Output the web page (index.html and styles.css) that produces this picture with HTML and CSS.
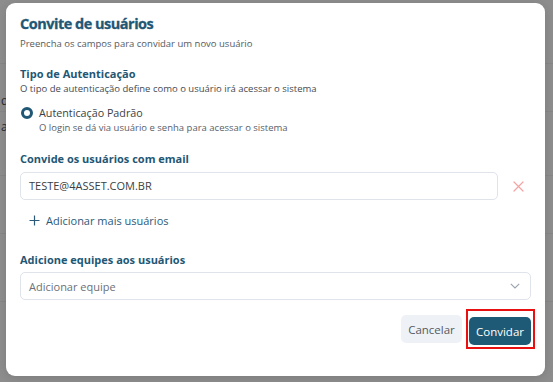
FILE: index.html
```html
<!DOCTYPE html>
<html lang="pt-BR">
<head>
<meta charset="utf-8">
<link rel="stylesheet" href="styles.css">
</head>
<body>
<div class="backdrop">
  <div class="bg-page">
    <div class="bg-row r1"></div>
    <div class="bg-row r2"><span>qu</span></div>
    <div class="bg-row r3"><span>ac</span></div>
    <div class="bg-row r4"></div>
    <div class="bg-row r5"></div>
  </div>
  <div class="modal">
    <h1 class="title">Convite de usuários</h1>
    <p class="subtitle">Preencha os campos para convidar um novo usuário</p>

    <section class="section auth">
      <h2 class="label">Tipo de Autenticação</h2>
      <p class="hint">O tipo de autenticação define como o usuário irá acessar o sistema</p>
      <div class="radio-row">
        <span class="radio"></span>
        <div class="radio-text">
          <div class="radio-title">Autenticação Padrão</div>
          <div class="radio-desc">O login se dá via usuário e senha para acessar o sistema</div>
        </div>
      </div>
    </section>

    <section class="section emails">
      <h2 class="label">Convide os usuários com email</h2>
      <div class="email-row">
        <div class="input">TESTE@4ASSET.COM.BR</div>
        <svg class="remove" width="11" height="11" viewBox="0 0 11 11"><path d="M1 1L10 10M10 1L1 10" stroke="#f4a3a3" stroke-width="1.2" fill="none" stroke-linecap="round"/></svg>
      </div>
      <div class="add-more">
        <svg width="11" height="11" viewBox="0 0 11 11"><path d="M5.5 0.5V10.5M0.5 5.5H10.5" stroke="#2a5a78" stroke-width="1.2" fill="none"/></svg>
        <span>Adicionar mais usuários</span>
      </div>
    </section>

    <section class="section teams">
      <h2 class="label">Adicione equipes aos usuários</h2>
      <div class="select">
        <span class="placeholder">Adicionar equipe</span>
        <svg width="10" height="6" viewBox="0 0 10 6"><path d="M0.8 0.8L5 5L9.2 0.8" stroke="#9aa3ae" stroke-width="1.1" fill="none"/></svg>
      </div>
    </section>

    <div class="actions">
      <button class="btn btn-cancel">Cancelar</button>
      <div class="highlight">
        <button class="btn btn-primary">Convidar</button>
      </div>
    </div>
  </div>
</div>
</body>
</html>
```

FILE: styles.css
```css
* { box-sizing: border-box; }
html, body { margin: 0; padding: 0; }
body {
  width: 553px;
  height: 382px;
  overflow: hidden;
  font-family: "Open Sans", "Noto Sans", sans-serif;
  background: #8d8d8d;
}
.backdrop {
  position: relative;
  width: 553px;
  height: 382px;
  padding: 3px 8px 6px 6px;
}
.bg-page {
  position: absolute;
  inset: 0;
  display: flex;
  flex-direction: column;
}
.bg-row {
  border-bottom: 1px solid #868686;
  font-size: 12px;
  color: #2a2a2a;
  padding-left: 1px;
}
.r1 { height: 64px; }
.r2 { height: 48px; padding-top: 30px; line-height: 14px; }
.r3 { height: 64px; padding-top: 8px; line-height: 14px; }
.r4 { height: 58px; }
.r5 { height: 68px; }

.modal {
  position: relative;
  width: 539px;
  height: 373px;
  background: #fff;
  border-radius: 9px;
  padding: 8px 14px 0 14px;
  box-shadow: 0 2px 8px rgba(0,0,0,0.12);
}
.title {
  margin: 0;
  font-size: 14.5px;
  line-height: 26px;
  font-weight: 700;
  letter-spacing: -0.5px;
  color: #1f5775;
  -webkit-text-stroke: 0.3px #1f5775;
}
.subtitle {
  margin: 0;
  font-size: 9.5px;
  line-height: 14px;
  color: #555b62;
}
.section { margin-top: 14px; }
.label {
  margin: 0;
  font-size: 11px;
  line-height: 17px;
  font-weight: 700;
  color: #1f5775;
}
.hint {
  margin: 0;
  font-size: 9.5px;
  line-height: 13px;
  color: #444a50;
}
.radio-row {
  display: flex;
  align-items: flex-start;
  gap: 6px;
  margin-top: 10px;
  padding-left: 1px;
}
.radio {
  width: 12px;
  height: 12px;
  border: 3px solid #1f5775;
  border-radius: 50%;
  margin-top: 2px;
  flex: none;
}
.radio-title {
  font-size: 10.75px;
  line-height: 16px;
  color: #3a3f45;
}
.radio-desc {
  font-size: 9.5px;
  line-height: 13px;
  color: #5a6068;
}
.emails { margin-top: 16px; }
.email-row {
  display: flex;
  align-items: center;
  margin-top: 5px;
}
.input {
  width: 478px;
  height: 28px;
  border: 1px solid #dfe3ea;
  border-radius: 5px;
  padding: 0 8px;
  font-size: 11px;
  line-height: 26px;
  color: #3a3f45;
}
.remove { margin-left: 15px; }
.add-more {
  display: flex;
  align-items: center;
  gap: 6px;
  margin-top: 13px;
  padding-left: 9px;
  font-size: 11px;
  color: #2a5a78;
}
.teams { margin-top: 23px; }
.select {
  display: flex;
  align-items: center;
  justify-content: space-between;
  height: 28px;
  margin-top: 4px;
  border: 1px solid #dfe3ea;
  border-radius: 5px;
  padding: 0 10px 0 8px;
  font-size: 11px;
  color: #6b7178;
}
.actions {
  display: flex;
  justify-content: flex-end;
  align-items: center;
  gap: 4px;
  margin-top: 9px;
  margin-right: -4px;
}
.btn {
  font-family: inherit;
  border: none;
  border-radius: 5px;
  height: 28px;
  font-size: 11.5px;
  cursor: pointer;
}
.btn-cancel {
  width: 61px;
  background: #eef2f7;
  color: #545a62;
}
.highlight {
  border: 2px solid #e81010;
  padding: 6px 2px 2px 1px;
}
.btn-primary {
  display: block;
  width: 62px;
  background: #1e5a76;
  color: #fff;
}
```
